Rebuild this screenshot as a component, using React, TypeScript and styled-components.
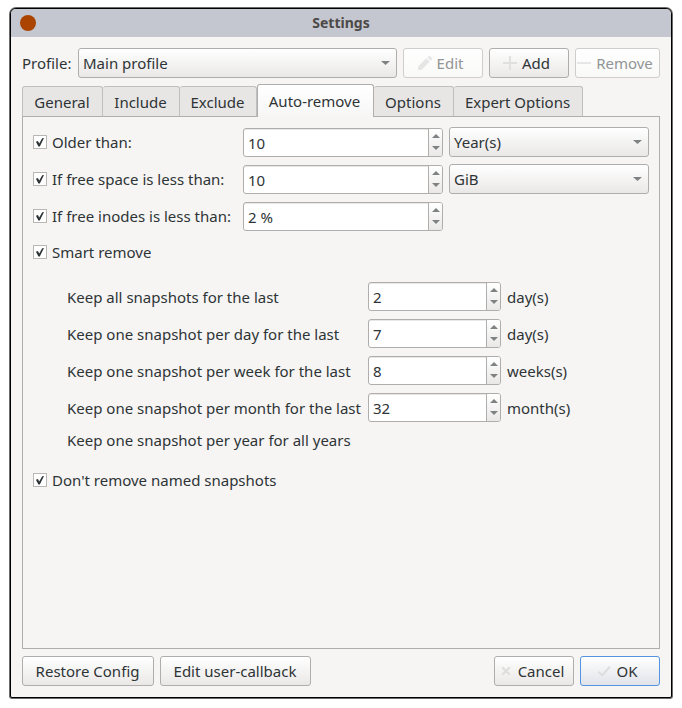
import React from "react";
import styled, { createGlobalStyle, css } from "styled-components";

const GlobalStyle = createGlobalStyle`
  * { box-sizing: border-box; }
  html, body { margin: 0; background: #fff; }
  body { font: 15px/20px "Noto Sans", sans-serif; color: #2e3436; overflow: hidden; }
`;

const Page = styled.div`
  width: 682px;
  height: 708px;
  padding: 8px 10px 10px;
`;

const Window = styled.main`
  width: 662px;
  height: 690px;
  display: flex;
  flex-direction: column;
  overflow: hidden;
  border: 1px solid #000;
  border-radius: 6px 6px 2px 2px;
  box-shadow: 0 0 0 1px #6b6b6b;
  background: #f6f5f4;
`;

const TitleBar = styled.header`
  height: 28px;
  flex: none;
  display: grid;
  grid-template-columns: 34px 1fr 34px;
  align-items: center;
  background: #c4c7cf;
`;

const WindowButton = styled.button`
  width: 16px;
  height: 16px;
  margin-left: 9px;
  padding: 0;
  border: 0;
  border-radius: 50%;
  background: #ab4400;
`;

const Title = styled.h1`
  margin: 0;
  text-align: center;
  font-size: 14px;
  line-height: 20px;
  font-weight: 700;
  font-stretch: 87.5%;
  color: #4d4948;
`;

const Content = styled.div`
  flex: 1;
  display: flex;
  flex-direction: column;
  padding: 11px 11px 11px;
`;

const ProfileBar = styled.div`
  display: grid;
  grid-template-columns: 50px 319px 80px 80px 85px;
  column-gap: 6px;
  align-items: center;
`;

const raised = css`
  border: 1px solid #b0aeac;
  border-radius: 3px;
  background: linear-gradient(#fff, #eae8e7);
`;

const Combo = styled.div`
  ${raised}
  height: 30px;
  display: flex;
  align-items: center;
  justify-content: space-between;
  padding: 0 6px 0 4px;
`;

const Button = styled.button<{
  $tone?: "disabled" | "default";
  $width?: number;
  $icon?: boolean;
}>`
  ${raised}
  height: 30px;
  width: ${(p) => (p.$width ? `${p.$width}px` : "auto")};
  display: flex;
  align-items: center;
  justify-content: center;
  gap: 4px;
  padding: 0 ${(p) => (p.$icon ? 6 : 1)}px 0 0;
  font: inherit;
  white-space: nowrap;
  color: inherit;
  ${(p) =>
    p.$tone === "disabled" &&
    css`
      color: #929595;
      border-color: #d0cecc;
      background: linear-gradient(#fff, #f9f9f8);
    `}
  ${(p) =>
    p.$tone === "default" &&
    css`
      border-color: #5294e2;
      background: linear-gradient(#fff, #e0e3e9);
    `}
`;

const TabBar = styled.div`
  height: 33px;
  margin-top: 6px;
  display: flex;
  align-items: flex-end;
  position: relative;
  z-index: 1;
`;

const Tab = styled.div<{ $width: number; $active?: boolean; $first?: boolean }>`
  width: ${(p) => p.$width}px;
  height: 31px;
  flex: none;
  padding-right: 1px;
  border: 1px solid #c1bfbd;
  border-bottom-color: #b0aeac;
  border-left-width: ${(p) => (p.$first ? 1 : 0)}px;
  border-radius: 3px 3px 0 0;
  background: #e8e6e5;
  text-align: center;
  line-height: 31px;
  white-space: nowrap;
  ${(p) =>
    p.$active &&
    css`
      height: 33px;
      padding-right: 2px;
      border: 1px solid #b0aeac;
      border-bottom: 0;
      background: linear-gradient(#fff, #f9f8f8 80%, #f6f5f4);
      line-height: 33px;
    `}
`;

const Pane = styled.section`
  height: 533px;
  margin-top: -1px;
  padding: 10px;
  border: 1px solid #b0aeac;
`;

const Rules = styled.div`
  display: grid;
  grid-template-columns: 204px 200px 200px;
  grid-template-rows: 30px 30px 30px 28px;
  column-gap: 6px;
  row-gap: 7px;
  align-items: center;
`;

const Check = styled.label`
  height: 20px;
  display: flex;
  align-items: center;
  gap: 5px;
  white-space: nowrap;
`;

const Box = styled.span`
  width: 14px;
  height: 14px;
  flex: none;
  display: grid;
  place-items: center;
  border: 1px solid #b9b7b5;
  background: #fff;
`;

const SpinFrame = styled.div<{ $top?: boolean }>`
  height: 29px;
  align-self: ${(p) => (p.$top ? "start" : "end")};
  display: flex;
  border: 1px solid #b0aeac;
  border-radius: 3px;
  background: #fff;
  box-shadow: inset 0 1px 0 #e9e8e7;
  overflow: hidden;
`;

const SpinValue = styled.div`
  flex: 1;
  padding-left: 4px;
  line-height: 29px;
`;

const SpinSteps = styled.div`
  width: 14px;
  display: flex;
  flex-direction: column;
  align-items: flex-start;
  gap: 8px;
  padding: 5px 0 0 3px;
  border-left: 1px solid #b0aeac;
  background: linear-gradient(#fff, #eae8e7);
`;

const Retention = styled.div`
  display: grid;
  grid-template-columns: 295px 133px auto;
  grid-template-rows: repeat(4, 30px) 20px;
  row-gap: 7px;
  column-gap: 6px;
  align-items: center;
  margin: 16px 0 0 34px;
  white-space: nowrap;
`;

const YearLine = styled.div`
  grid-column: 1 / -1;
`;

const NamedSnapshots = styled.div`
  margin-top: 20px;
`;

const Footer = styled.footer`
  display: flex;
  gap: 6px;
  margin-top: 7px;
`;

const Spacer = styled.div`
  flex: 1;
`;

const Arrow = ({ up = false, wide = false }: { up?: boolean; wide?: boolean }) => (
  <svg width={wide ? 9 : 8} height="4" viewBox="0 0 8 4" preserveAspectRatio="none">
    <path d={up ? "M0 4L4 0L8 4Z" : "M0 0H8L4 4Z"} fill="#7f8282" />
  </svg>
);

const Spin = ({ value, top }: { value: string; top?: boolean }) => (
  <SpinFrame $top={top}>
    <SpinValue>{value}</SpinValue>
    <SpinSteps>
      <Arrow up />
      <Arrow />
    </SpinSteps>
  </SpinFrame>
);

const Checkbox = ({ children }: { children: React.ReactNode }) => (
  <Check>
    <Box>
      <svg width="12" height="12" viewBox="0 0 12 12">
        <path d="M1.9 5.8L3.9 5.1L5.2 7.5L8.2 2.2L10 1.9L5.8 10.4H4.4Z" fill="#2e3436" />
      </svg>
    </Box>
    {children}
  </Check>
);

const Pencil = () => (
  <svg width="16" height="16" viewBox="0 0 16 16" fill="#e6e6e6">
    <path d="M1 15V11.6L9.3 3.3L12.7 6.7L4.4 15ZM10.3 2.3L11.8.9Q12.4.4 13 .9L15.1 3Q15.6 3.6 15.1 4.2L13.7 5.7Z" />
  </svg>
);

const Plus = () => (
  <svg width="16" height="16" viewBox="0 0 16 16" fill="#e0e0df">
    <path d="M1 7H7V1H9V7H15V9H9V15H7V9H1Z" />
  </svg>
);

const Minus = () => (
  <svg width="16" height="16" viewBox="0 0 16 16" fill="#e6e6e6">
    <path d="M1 7H15V9H1Z" />
  </svg>
);

const Cross = () => (
  <svg width="16" height="16" viewBox="0 0 16 16" fill="none" stroke="#dededd" strokeWidth="2.2">
    <path d="M4.2 4.2L11.8 11.8M11.8 4.2L4.2 11.8" />
  </svg>
);

const Tick = () => (
  <svg width="16" height="16" viewBox="0 0 16 16" fill="none" stroke="#dcdddf" strokeWidth="2">
    <path d="M2.5 8.7L6.2 12.4L14 3.6" />
  </svg>
);

const tabs = [
  { label: "General", width: 81 },
  { label: "Include", width: 77 },
  { label: "Exclude", width: 77 },
  { label: "Auto-remove", width: 117 },
  { label: "Options", width: 80 },
  { label: "Expert Options", width: 129 },
];

const retention = [
  ["Keep all snapshots for the last", "2", "day(s)"],
  ["Keep one snapshot per day for the last", "7", "day(s)"],
  ["Keep one snapshot per week for the last", "8", "weeks(s)"],
  ["Keep one snapshot per month for the last", "32", "month(s)"],
];

export default function App() {
  return (
    <Page>
      <GlobalStyle />
      <Window>
        <TitleBar>
          <WindowButton aria-label="Close" />
          <Title>Settings</Title>
        </TitleBar>
        <Content>
          <ProfileBar>
            <span>Profile:</span>
            <Combo>
              Main profile
              <Arrow wide />
            </Combo>
            <Button $icon $tone="disabled"><Pencil />Edit</Button>
            <Button $icon><Plus />Add</Button>
            <Button $icon $tone="disabled"><Minus />Remove</Button>
          </ProfileBar>
          <TabBar>
            {tabs.map((t, i) => (
              <Tab key={t.label} $width={t.width} $first={i === 0} $active={i === 3}>
                {t.label}
              </Tab>
            ))}
          </TabBar>
          <Pane>
            <Rules>
              <Checkbox>Older than:</Checkbox>
              <Spin value="10" />
              <Combo>Year(s)<Arrow wide /></Combo>
              <Checkbox>If free space is less than:</Checkbox>
              <Spin value="10" />
              <Combo>GiB<Arrow wide /></Combo>
              <Checkbox>If free inodes is less than:</Checkbox>
              <Spin value="2 %" />
              <span />
              <Checkbox>Smart remove</Checkbox>
            </Rules>
            <Retention>
              {retention.map(([label, value, unit]) => (
                <React.Fragment key={label}>
                  <span>{label}</span>
                  <Spin top value={value} />
                  <span>{unit}</span>
                </React.Fragment>
              ))}
              <YearLine>Keep one snapshot per year for all years</YearLine>
            </Retention>
            <NamedSnapshots>
              <Checkbox>Don't remove named snapshots</Checkbox>
            </NamedSnapshots>
          </Pane>
          <Footer>
            <Button $width={132}>Restore Config</Button>
            <Button $width={151}>Edit user-callback</Button>
            <Spacer />
            <Button $icon $width={80}><Cross />Cancel</Button>
            <Button $icon $width={80} $tone="default"><Tick />OK</Button>
          </Footer>
        </Content>
      </Window>
    </Page>
  );
}
